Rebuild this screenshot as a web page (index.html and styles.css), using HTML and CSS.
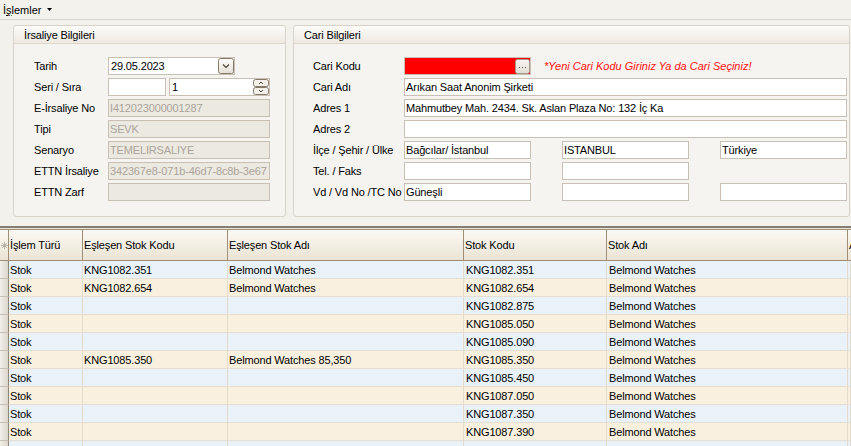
FILE: index.html
```html
<!DOCTYPE html>
<html lang="tr">
<head>
<meta charset="utf-8">
<title>İrsaliye</title>
<link rel="stylesheet" href="styles.css">
</head>
<body>
<div class="menubar">
  <div class="menu-item"><span>İ<span class="mnemonic">ş</span>lemler</span>
    <svg class="caret" width="5" height="3" viewBox="0 0 5 3"><path d="M0 0H5L2.5 3Z" fill="#000"/></svg>
  </div>
</div>

<div class="panels">
  <section class="group group-left">
    <div class="group-head">İrsaliye Bilgileri</div>
    <div class="group-body">
      <div class="frow"><span class="flabel l-left">Tarih</span>
        <div class="field w-127 with-btn"><span class="ftext">29.05.2023</span>
          <svg class="dd-btn" width="16" height="16" viewBox="0 0 16 16"><defs><linearGradient id="g1" x1="0" y1="0" x2="0" y2="1"><stop offset="0" stop-color="#fdfcfa"/><stop offset="1" stop-color="#e6e1d6"/></linearGradient></defs><rect x="0.5" y="0.5" width="15" height="15" rx="2" fill="url(#g1)" stroke="#857a6a"/><path d="M5 6.5L8 9.5L11 6.5" fill="none" stroke="#4d4538" stroke-width="1.2"/></svg>
        </div>
      </div>
      <div class="frow"><span class="flabel l-left">Seri / Sıra</span>
        <div class="field w-58"></div>
        <div class="field w-101 gap3 with-btn"><span class="ftext">1</span>
          <svg class="spin" width="16" height="16" viewBox="0 0 16 16"><rect x="0.5" y="0.5" width="15" height="7" rx="2" fill="#f3f0ea" stroke="#857a6a"/><rect x="0.5" y="8.5" width="15" height="7" rx="2" fill="#f3f0ea" stroke="#857a6a"/><path d="M6 5L8 3L10 5" fill="none" stroke="#4d4538"/><path d="M6 11L8 13L10 11" fill="none" stroke="#4d4538"/></svg>
        </div>
      </div>
      <div class="frow"><span class="flabel l-left">E-İrsaliye No</span><div class="field disabled w-162">I412023000001287</div></div>
      <div class="frow"><span class="flabel l-left">Tipi</span><div class="field disabled w-162">SEVK</div></div>
      <div class="frow"><span class="flabel l-left">Senaryo</span><div class="field disabled w-162">TEMELIRSALIYE</div></div>
      <div class="frow"><span class="flabel l-left">ETTN İrsaliye</span><div class="field disabled w-162">342367e8-071b-46d7-8c8b-3e67</div></div>
      <div class="frow"><span class="flabel l-left">ETTN Zarf</span><div class="field disabled w-162"></div></div>
    </div>
  </section>

  <section class="group group-right">
    <div class="group-head">Cari Bilgileri</div>
    <div class="group-body body-right">
      <div class="frow"><span class="flabel l-right">Cari Kodu</span>
        <div class="field w-127 red with-btn">
          <span class="ftext"></span>
          <svg class="dots-btn" width="15" height="15" viewBox="0 0 15 15"><defs><linearGradient id="g2" x1="0" y1="0" x2="0" y2="1"><stop offset="0" stop-color="#f8f6f1"/><stop offset="1" stop-color="#e2ddd2"/></linearGradient></defs><rect x="0.5" y="0.5" width="14" height="14" rx="2" fill="url(#g2)" stroke="#a39a8c"/><rect x="4" y="8" width="1" height="1" fill="#5a5248"/><rect x="7" y="8" width="1" height="1" fill="#5a5248"/><rect x="10" y="8" width="1" height="1" fill="#5a5248"/></svg>
        </div>
        <span class="warn">*Yeni Cari Kodu Giriniz Ya da Cari Seçiniz!</span>
      </div>
      <div class="frow"><span class="flabel l-right">Cari Adı</span><div class="field w-443">Arıkan Saat Anonim Şirketi</div></div>
      <div class="frow"><span class="flabel l-right">Adres 1</span><div class="field w-443">Mahmutbey Mah. 2434. Sk. Aslan Plaza No: 132 İç Ka</div></div>
      <div class="frow"><span class="flabel l-right">Adres 2</span><div class="field w-443"></div></div>
      <div class="frow"><span class="flabel l-right">İlçe / Şehir / Ülke</span>
        <div class="field w-127">Bağcılar/ İstanbul</div>
        <div class="field w-127 gap31">ISTANBUL</div>
        <div class="field w-127 gap31">Türkiye</div>
      </div>
      <div class="frow"><span class="flabel l-right">Tel. / Faks</span>
        <div class="field w-127"></div>
        <div class="field w-127 gap31"></div>
      </div>
      <div class="frow"><span class="flabel l-right">Vd / Vd No /TC No</span>
        <div class="field w-127">Güneşli</div>
        <div class="field w-127 gap31"></div>
        <div class="field w-127 gap31"></div>
      </div>
    </div>
  </section>
</div>

<div class="splitter"></div>

<table class="grid">
  <colgroup>
    <col class="c-ind"><col class="c-1"><col class="c-2"><col class="c-3"><col class="c-4"><col class="c-5"><col class="c-6">
  </colgroup>
  <thead>
    <tr>
      <th class="ind"><svg width="7" height="7" viewBox="0 0 7 7"><path d="M3.5 0V7M0 3.5H7M1 1L6 6M6 1L1 6" stroke="#b8b2a8" stroke-width="1"/></svg></th>
      <th>İşlem Türü</th><th>Eşleşen Stok Kodu</th><th>Eşleşen Stok Adı</th><th>Stok Kodu</th><th>Stok Adı</th><th>Açıklama</th>
    </tr>
  </thead>
  <tbody>
    <tr class="odd"><td class="ind"></td><td>Stok</td><td>KNG1082.351</td><td>Belmond Watches</td><td>KNG1082.351</td><td>Belmond Watches</td><td></td></tr>
    <tr class="even"><td class="ind"></td><td>Stok</td><td>KNG1082.654</td><td>Belmond Watches</td><td>KNG1082.654</td><td>Belmond Watches</td><td></td></tr>
    <tr class="odd"><td class="ind"></td><td>Stok</td><td></td><td></td><td>KNG1082.875</td><td>Belmond Watches</td><td></td></tr>
    <tr class="even"><td class="ind"></td><td>Stok</td><td></td><td></td><td>KNG1085.050</td><td>Belmond Watches</td><td></td></tr>
    <tr class="odd"><td class="ind"></td><td>Stok</td><td></td><td></td><td>KNG1085.090</td><td>Belmond Watches</td><td></td></tr>
    <tr class="even"><td class="ind"></td><td>Stok</td><td>KNG1085.350</td><td>Belmond Watches 85,350</td><td>KNG1085.350</td><td>Belmond Watches</td><td></td></tr>
    <tr class="odd"><td class="ind"></td><td>Stok</td><td></td><td></td><td>KNG1085.450</td><td>Belmond Watches</td><td></td></tr>
    <tr class="even"><td class="ind"></td><td>Stok</td><td></td><td></td><td>KNG1087.050</td><td>Belmond Watches</td><td></td></tr>
    <tr class="odd"><td class="ind"></td><td>Stok</td><td></td><td></td><td>KNG1087.350</td><td>Belmond Watches</td><td></td></tr>
    <tr class="even"><td class="ind"></td><td>Stok</td><td></td><td></td><td>KNG1087.390</td><td>Belmond Watches</td><td></td></tr>
    <tr class="odd"><td class="ind"></td><td>Stok</td><td></td><td></td><td>KNG1087.450</td><td>Belmond Watches</td><td></td></tr>
  </tbody>
</table>
</body>
</html>
```
FILE: styles.css
```css
* { box-sizing: border-box; }
html, body { margin: 0; padding: 0; }
body {
  width: 851px;
  height: 446px;
  overflow: hidden;
  background: #f3f1ec;
  font-family: "Liberation Sans", Arial, sans-serif;
  font-size: 11px;
  letter-spacing: -0.15px;
  color: #000;
}

/* menu */
.menubar {
  height: 20px;
  border-bottom: 1px solid #dcd6cb;
  background: #f4f2ed;
  display: flex;
  align-items: center;
  padding-left: 3px;
}
.menu-item { display: flex; align-items: center; gap: 5px; letter-spacing: 0; }
.mnemonic { text-decoration: underline; }
.caret { display: block; }

/* group boxes */
.panels {
  display: flex;
  gap: 7px;
  padding: 5px 1px 0 13px;
}
.group {
  height: 192px;
  background: #f6f4f0;
  border: 1px solid #d9d2c6;
  border-radius: 3px;
  display: flex;
  flex-direction: column;
}
.group-left { width: 273px; }
.group-right { flex: 1; }
.group-head {
  height: 18px;
  border-bottom: 1px solid #ddd6ca;
  background: linear-gradient(#fcfbf9, #eeeae2);
  border-radius: 3px 3px 0 0;
  padding-left: 10px;
  display: flex;
  align-items: center;
}
.group-body {
  padding: 13px 0 0 20px;
  display: flex;
  flex-direction: column;
  gap: 3px;
}
.body-right { padding-left: 19px; }

.frow { display: flex; align-items: center; height: 18px; }
.flabel { white-space: nowrap; flex-shrink: 0; overflow: hidden; }
.l-left { width: 74px; }
.l-right { width: 91px; }

.field {
  height: 18px;
  border: 1px solid #c9c0b3;
  background: #fff;
  padding: 0 1px;
  display: flex;
  align-items: center;
  white-space: nowrap;
  overflow: hidden;
  flex-shrink: 0;
}
.field.disabled { background: #ece9e1; color: #aba49a; }
.field.red { background: #ff0000; }
.with-btn { justify-content: space-between; padding-right: 0; }
.ftext { padding-left: 1px; }
.dd-btn { display: block; }
.spin { display: block; }
.dots-btn { display: block; margin-right: 0; }

.w-58 { width: 58px; }
.w-101 { width: 101px; }
.w-127 { width: 127px; }
.w-162 { width: 162px; }
.w-443 { width: 443px; }
.gap3 { margin-left: 3px; }
.gap31 { margin-left: 31px; }

.warn {
  margin-left: 13px;
  color: #ff1010;
  font-style: italic;
  white-space: nowrap;
  letter-spacing: 0;
}

/* splitter */
.splitter {
  margin-top: 9px;
  height: 3px;
  border-top: 2px solid #857d72;
  background: #e9e5dd;
}

/* grid */
.grid {
  border-collapse: separate;
  border-spacing: 0;
  table-layout: fixed;
  width: 851px;
}
.c-ind { width: 9px; }
.c-1 { width: 74px; }
.c-2 { width: 145px; }
.c-3 { width: 236px; }
.c-4 { width: 143px; }
.c-5 { width: 241px; }
.c-6 { width: 3px; }

.grid th {
  height: 32px;
  padding: 0 0 0 1px;
  font-weight: normal;
  text-align: left;
  white-space: nowrap;
  overflow: hidden;
  background: linear-gradient(#fbf9f4, #ebe4d5);
  border-top: 1px solid #a28e76;
  border-bottom: 1px solid #a28e76;
  border-right: 1px solid #a28e76;
}
.grid th:last-child { border-right: 0; }
.grid th.ind { padding: 0; text-align: center; vertical-align: middle; }
.grid th.ind svg { display: block; margin: 0 auto; }

.grid td {
  height: 18px;
  padding: 0 0 0 1px;
  white-space: nowrap;
  overflow: hidden;
  border-bottom: 1px solid #e6dfd1;
  border-right: 1px solid #e3dbcc;
}
.grid tr.odd td { background: #eaf2f9; }
.grid tr.even td { background: #faf0df; }
.grid td:nth-child(5), .grid td:nth-child(6) { padding-left: 2px; }
.grid tr td.ind {
  padding: 0;
  background: linear-gradient(90deg, #f2efe9, #dcd7cd);
  border-right: 1px solid #8e8678;
  border-bottom: 1px solid #c6c0b4;
}
```
